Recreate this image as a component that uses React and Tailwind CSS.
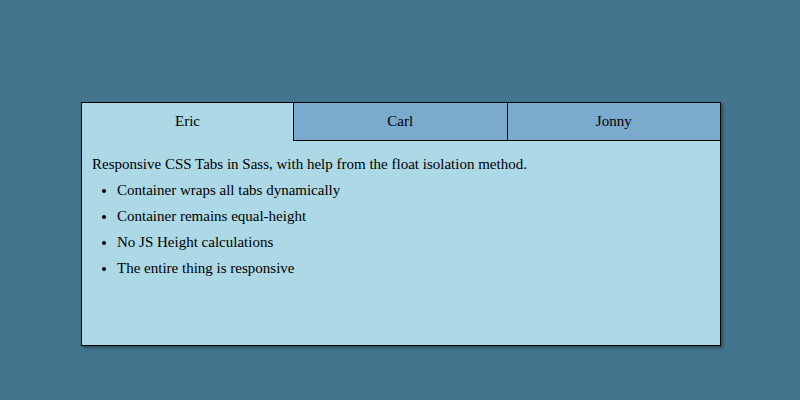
export default function App() {
  const items = [
    "Container wraps all tabs dynamically",
    "Container remains equal-height",
    "No JS Height calculations",
    "The entire thing is responsive",
  ];
  return (
    <div
      className="w-[800px] h-[400px] bg-[#44758f] pt-[102px] text-black"
      style={{ fontFamily: '"Liberation Serif", "Times New Roman", serif' }}
    >
      <div className="ml-[81px] w-[640px] h-[244px] border border-black bg-[#add8e6] shadow-[2px_2px_3px_rgba(0,0,0,0.35)] flex flex-col">
        <div className="flex h-[38px] text-[15px]">
          <div className="w-[211px] flex items-center justify-center pb-[2px] bg-[#add8e6]">Eric</div>
          <div className="flex-1 flex items-center justify-center pb-px bg-[#7aaacd] border-l border-b border-black">Carl</div>
          <div className="flex-1 flex items-center justify-center pb-px bg-[#7aaacd] border-l border-b border-black">Jonny</div>
        </div>
        <div className="px-[10px] pt-[10px] text-[15px] leading-[26px]">
          <p>Responsive CSS Tabs in Sass, with help from the float isolation method.</p>
          <ul className="list-disc pl-[25px]">
            {items.map((t) => (
              <li key={t}>{t}</li>
            ))}
          </ul>
        </div>
      </div>
    </div>
  );
}
